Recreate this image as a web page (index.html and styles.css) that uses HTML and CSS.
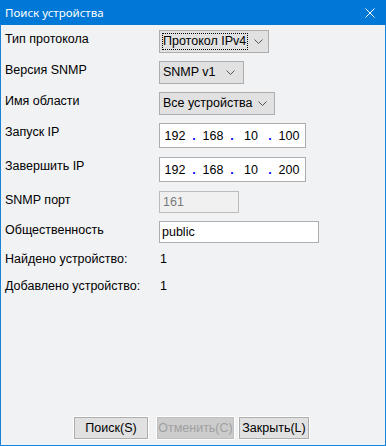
FILE: index.html
```html
<!DOCTYPE html>
<html lang="ru">
<head>
    <meta charset="UTF-8">
    <title>Поиск устройства</title>
    <link rel="stylesheet" href="styles.css">
</head>
<body>
    <div class="window">
        <div class="titlebar">
            <span class="title">Поиск устройства</span>
            <svg class="close" width="10" height="10" viewBox="0 0 10 10">
                <path d="M0.5 0.5 L9.5 9.5 M9.5 0.5 L0.5 9.5" stroke="#fff" stroke-width="1" fill="none"/>
            </svg>
        </div>
        <div class="content">
            <div class="form">
                <div class="row row-sel">
                    <div class="label">Тип протокола</div>
                    <div class="select select-protocol">
                        <span class="value focused">Протокол IPv4</span>
                        <svg class="chevron" width="9" height="5" viewBox="0 0 9 5"><path d="M0.5 0.5 L4.5 4.5 L8.5 0.5" stroke="#555" fill="none"/></svg>
                    </div>
                </div>
                <div class="row row-sel">
                    <div class="label">Версия SNMP</div>
                    <div class="select select-snmp">
                        <span class="value">SNMP v1</span>
                        <svg class="chevron" width="9" height="5" viewBox="0 0 9 5"><path d="M0.5 0.5 L4.5 4.5 L8.5 0.5" stroke="#555" fill="none"/></svg>
                    </div>
                </div>
                <div class="row row-sel">
                    <div class="label">Имя области</div>
                    <div class="select select-area">
                        <span class="value">Все устройства</span>
                        <svg class="chevron" width="9" height="5" viewBox="0 0 9 5"><path d="M0.5 0.5 L4.5 4.5 L8.5 0.5" stroke="#555" fill="none"/></svg>
                    </div>
                </div>
                <div class="row row-ip">
                    <div class="label">Запуск IP</div>
                    <div class="ip">
                        <span class="seg">192</span><span class="dot">.</span>
                        <span class="seg">168</span><span class="dot">.</span>
                        <span class="seg">10</span><span class="dot">.</span>
                        <span class="seg">100</span>
                    </div>
                </div>
                <div class="row row-ip">
                    <div class="label">Завершить IP</div>
                    <div class="ip">
                        <span class="seg">192</span><span class="dot">.</span>
                        <span class="seg">168</span><span class="dot">.</span>
                        <span class="seg">10</span><span class="dot">.</span>
                        <span class="seg">200</span>
                    </div>
                </div>
                <div class="row row-port">
                    <div class="label">SNMP порт</div>
                    <div class="input input-port disabled">161</div>
                </div>
                <div class="row row-comm">
                    <div class="label">Общественность</div>
                    <div class="input input-comm">public</div>
                </div>
                <div class="row row-info">
                    <div class="label">Найдено устройство:</div>
                    <div class="info">1</div>
                </div>
                <div class="row row-info">
                    <div class="label">Добавлено устройство:</div>
                    <div class="info">1</div>
                </div>
            </div>
            <div class="buttons">
                <div class="btn btn-search">Поиск(S)</div>
                <div class="btn btn-cancel disabled">Отменить(C)</div>
                <div class="btn btn-close">Закрыть(L)</div>
            </div>
        </div>
    </div>
</body>
</html>
```

FILE: styles.css
```css
body, html {
    margin: 0;
    height: 100%;
    font-family: 'Liberation Sans', Arial, sans-serif;
    font-size: 12.5px;
    color: #000;
    overflow: hidden;
}

.window {
    width: 386px;
    height: 446px;
    box-sizing: border-box;
    border: 1px solid #1883d7;
    border-top: none;
    display: flex;
    flex-direction: column;
    background: #f1f2f4;
}

.titlebar {
    height: 25px;
    flex: none;
    background: #0078d7;
    margin: 0 -1px;
    display: flex;
    align-items: center;
    padding: 0 11px 0 5px;
    color: #fff;
}

.title {
    font-family: 'Noto Sans', 'Open Sans', sans-serif;
    font-size: 11.5px;
    flex: 1;
}

.content {
    flex: 1;
    display: flex;
    flex-direction: column;
    padding: 5px 0 6px 4px;
}

.row {
    display: flex;
    align-items: flex-start;
    white-space: nowrap;
}

.row-sel { height: 31px; }
.row-ip { height: 34px; }
.row-port { height: 30px; }
.row-comm { height: 29px; }
.row-info { height: 27px; }

.label {
    width: 154px;
    flex: none;
    padding-top: 2px;
    line-height: 15px;
}

.select {
    height: 23px;
    box-sizing: border-box;
    border: 1px solid #adadad;
    background: #e1e1e1;
    display: flex;
    align-items: center;
    padding: 0 8px 0 3px;
}

.select-protocol { width: 110px; }
.select-snmp { width: 85px; }
.select-area { width: 116px; }

.value {
    flex: 1;
    padding: 1px 0;
    line-height: 15px;
}

.value.focused {
    flex: none;
    margin-right: auto;
    padding: 1px 2px 1px 1px;
    margin-left: -1px;
    outline: 1px dotted #000;
    outline-offset: -1px;
}

.chevron {
    flex: none;
    margin-left: 6px;
}

.ip {
    width: 147px;
    height: 25px;
    box-sizing: border-box;
    border: 1px solid #adadad;
    background: #fff;
    display: flex;
    align-items: center;
}

.seg {
    width: 30px;
    text-align: center;
}

.dot {
    width: 8px;
    text-align: center;
    color: #0000ff;
    font-weight: bold;
}

.input {
    height: 22px;
    box-sizing: border-box;
    border: 1px solid #adadad;
    background: #fff;
    padding: 2px 0 0 3px;
    line-height: 16px;
}

.input.disabled {
    background: #f0f0f0;
    border-color: #bcbcbc;
    color: #7a7a7a;
}

.input-port { width: 80px; }
.input-comm { width: 160px; padding-left: 2px; }

.info {
    padding-top: 2px;
    line-height: 15px;
    padding-left: 1px;
}

.buttons {
    margin-top: auto;
    display: flex;
    padding-left: 69px;
}

.btn {
    height: 22px;
    box-sizing: border-box;
    border: 1px solid #adadad;
    background: #e1e1e1;
    box-shadow: 0 0 0 1px #fff;
    display: flex;
    align-items: center;
    justify-content: center;
    line-height: 15px;
}

.btn-search { width: 74px; }
.btn-cancel { width: 77px; margin-left: 9px; }
.btn-close { width: 70px; margin-left: 5px; }

.btn.disabled {
    background: #cccccc;
    border-color: #bfbfbf;
    color: #a0a0a0;
}
```
